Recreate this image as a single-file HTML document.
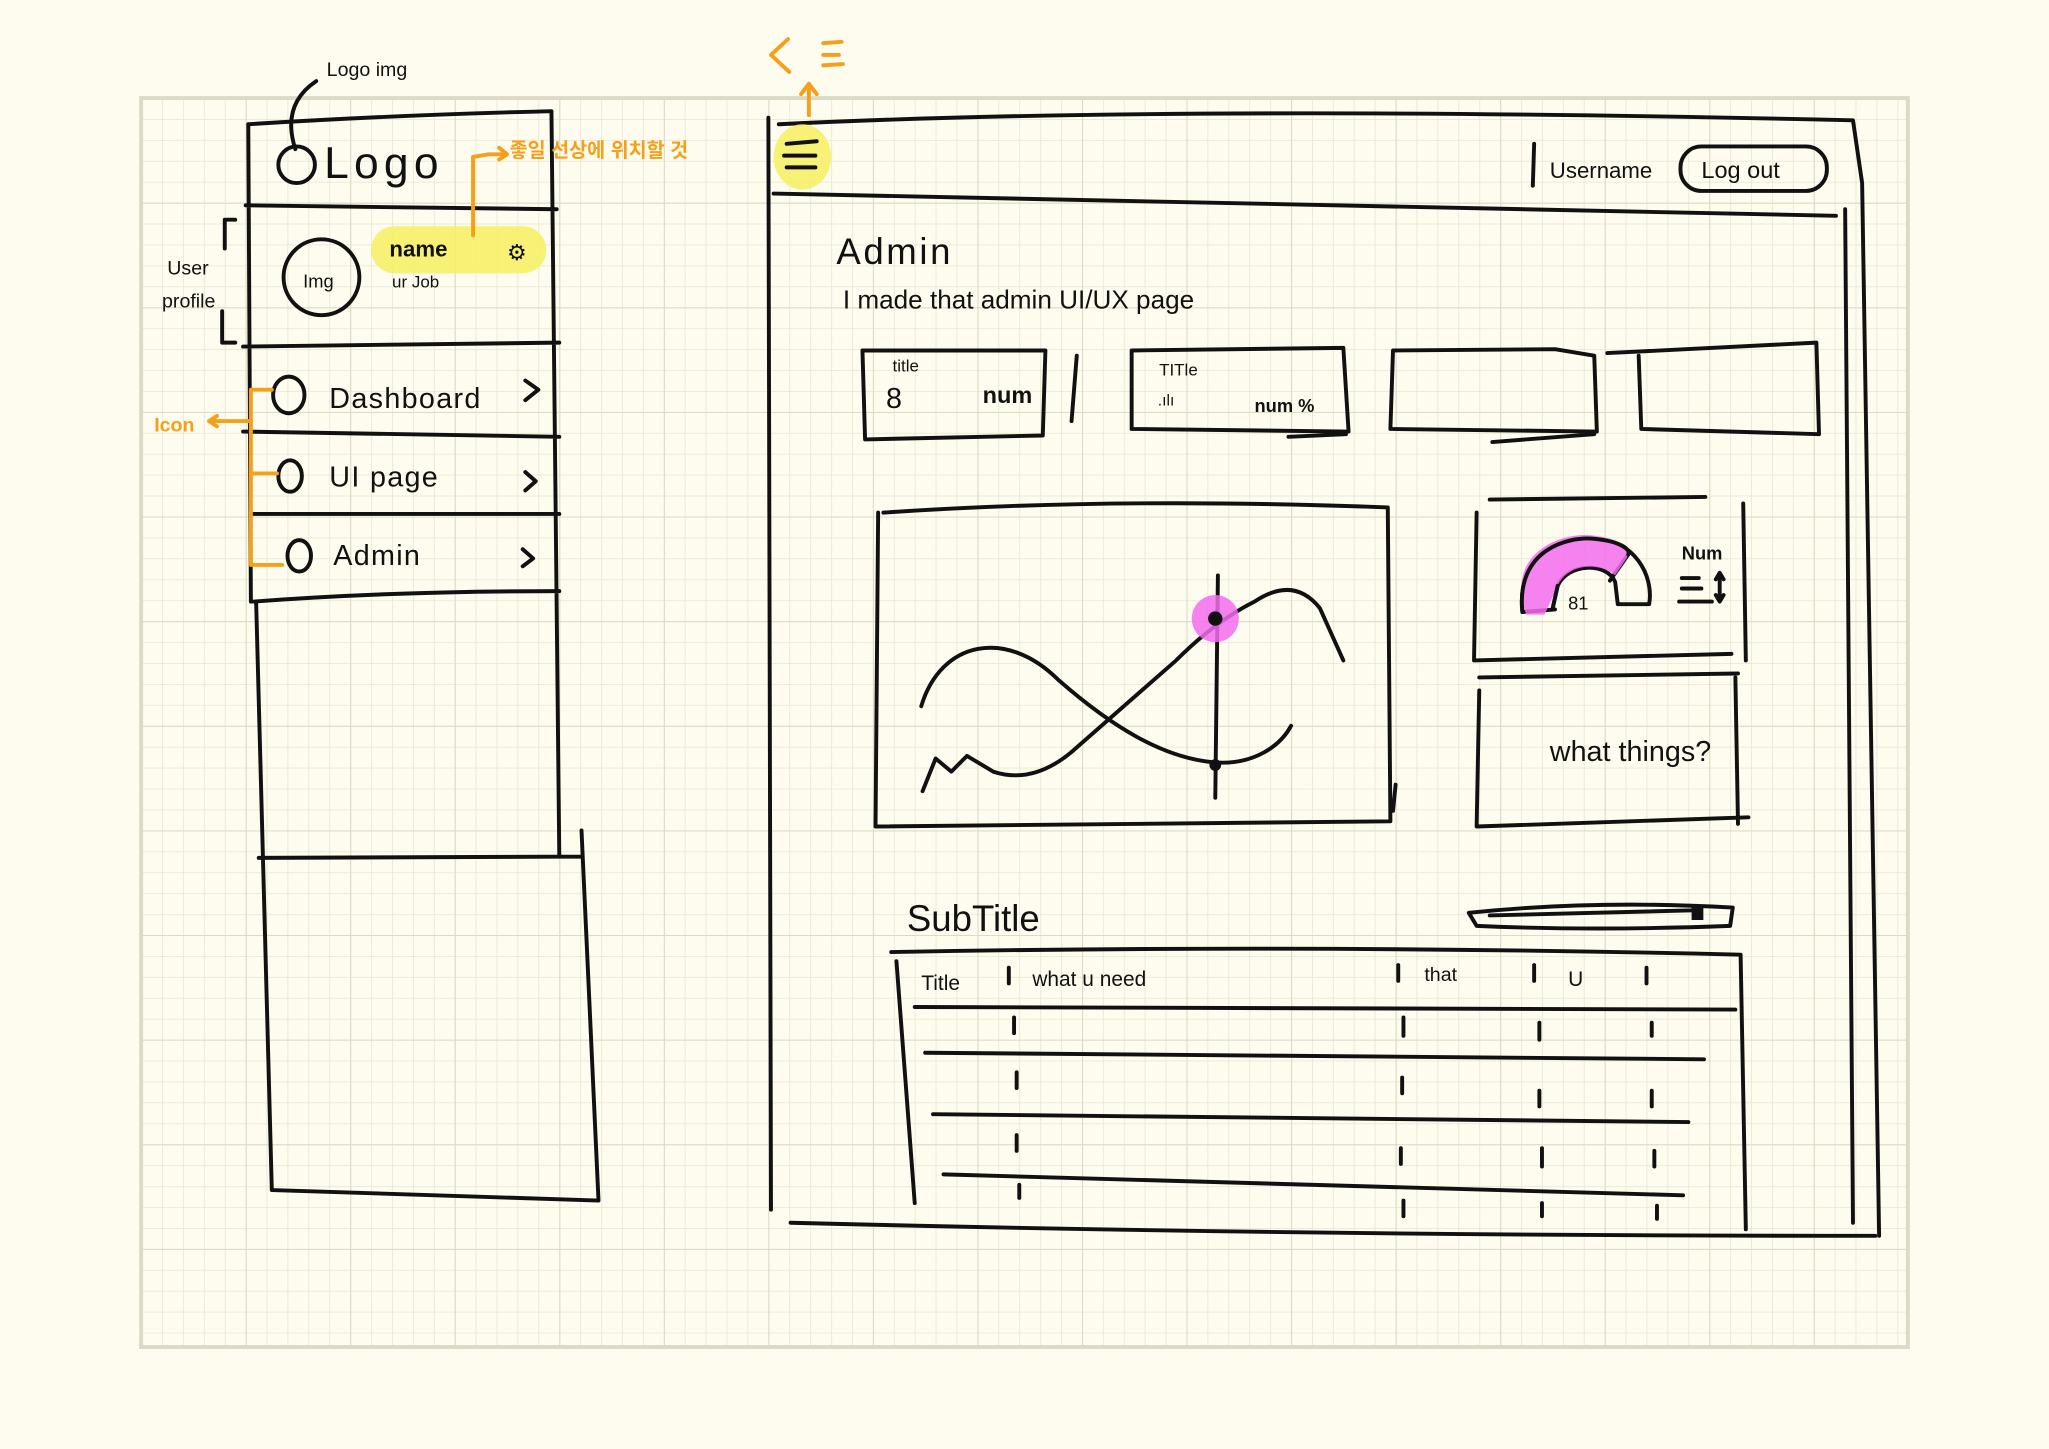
<!DOCTYPE html>
<html><head><meta charset="utf-8"><style>
html,body{margin:0;padding:0;background:#fdfcee;}
svg{display:block}
text{font-family:"Liberation Sans","Noto Sans CJK KR",sans-serif;}
</style></head><body>
<svg width="2049" height="1449" viewBox="0 0 1568 1108" preserveAspectRatio="none" xmlns="http://www.w3.org/2000/svg">
<defs>
<pattern id="g" x="108" y="75" width="16" height="16" patternUnits="userSpaceOnUse">
<path d="M0 0V16M0 0H16" stroke="#e7e5d3" stroke-width="1.2" fill="none"/>
</pattern>
<pattern id="G" x="108" y="75" width="80" height="80" patternUnits="userSpaceOnUse">
<path d="M0 0V80M0 0H80" stroke="#dcdac6" stroke-width="1.6" fill="none"/>
</pattern>
</defs>
<rect width="1568" height="1108" fill="#fdfcee"/>
<rect x="108" y="75" width="1352" height="955" fill="url(#g)"/>
<rect x="108" y="75" width="1352" height="955" fill="url(#G)"/>
<rect x="108" y="75" width="1352" height="955" fill="none" stroke="#dcdac6" stroke-width="3"/>

<g fill="none" stroke="#111" stroke-width="3" stroke-linecap="round" stroke-linejoin="round">
<path d="M190 95 Q300 88 422 85 L428 655 M190 95 L192 460 M188 157 L426 160 M186 265 L428 262 M186 330 L428 334 M192 393 L428 393 M194 460 Q300 452 428 452 M196 460 L208 910 L458 918 L445 635 M198 656 L445 655"/>
<circle cx="227" cy="126" r="14"/>
<path d="M226 114 Q215 80 242 62"/>
<circle cx="246" cy="212" r="29"/>
<path d="M180 168 L172 168 L172 190 M170 238 L170 262 L180 262"/>
<ellipse cx="221" cy="302" rx="12" ry="14"/>
<ellipse cx="222" cy="364" rx="9" ry="12"/>
<ellipse cx="229" cy="425" rx="9" ry="12"/>
<path d="M402 291 L412 298 L402 306 M402 361 L410 368 L402 375 M400 420 L408 427 L400 433"/>
<path d="M588 90 L590 925 M596 95 Q900 80 1418 92 L1425 140 L1438 945 M592 148 Q1000 158 1405 165 M605 935 Q1000 945 1435 945 M1412 160 L1418 935"/>
<path d="M1174 110 L1173 142"/>
<rect x="1286" y="112" width="112" height="34" rx="16"/>
<path d="M660 268 L800 268 L798 333 L662 336 Z M824 272 L820 322"/>
<path d="M866 268 L1028 266 L1032 330 L866 328 Z M986 334 L1030 332"/>
<path d="M1066 268 L1190 267 L1220 272 L1222 330 L1064 328 Z M1142 338 L1220 332"/>
<path d="M1230 270 L1390 262 L1392 332 L1256 328 L1254 272"/>
<path d="M676 392 Q850 380 1062 388 L1064 628 L670 632 L672 392 M1068 600 L1066 620"/>
<path d="M705 540 C720 490 770 480 810 520 C850 555 890 580 930 583 C960 585 980 570 988 555"/>
<path d="M706 605 L716 580 L728 590 L740 578 L760 590 Q790 600 820 575 Q860 540 900 505 Q930 475 960 460 Q990 440 1010 465 L1028 505"/>
<path d="M932 440 L930 610"/>
<path d="M1140 382 L1305 380 M1130 392 L1128 505 L1325 500 M1334 385 L1336 505 M1132 518 L1330 515 M1132 528 L1130 632 L1338 625 M1328 518 L1330 630"/>
<path d="M1165 468 C1160 420 1200 410 1220 412 C1250 412 1266 440 1262 462 L1238 462 L1236 445 C1230 430 1200 430 1192 448 L1188 466 M1165 468 L1190 466 M1232 444 L1246 424"/>
<path d="M1287 442 L1300 442 M1287 450 L1302 450 M1285 460 L1310 460 M1316 440 L1316 458 M1313 443 L1316 438 L1319 443 M1313 455 L1316 460 L1319 455"/>
<path d="M1124 698 Q1220 688 1326 694 L1324 708 Q1220 712 1130 708 Z M1140 700 L1300 696"/>
<path d="M682 728 Q1000 722 1332 730 L1336 940 M686 735 L700 920 M700 770 L1328 772 M708 805 L1304 810 M714 852 L1292 858 M722 898 L1288 914"/>
<path d="M772 740 L772 752 M1070 738 L1070 750 M1174 738 L1174 750 M1260 740 L1260 752 M776 778 L776 790 M1074 778 L1074 792 M1178 782 L1178 795 M1264 782 L1264 792 M778 820 L778 832 M1073 824 L1073 836 M1178 834 L1178 846 M1264 834 L1264 846 M778 868 L778 880 M1072 878 L1072 890 M1180 878 L1180 892 M1266 880 L1266 892 M780 906 L780 916 M1074 918 L1074 930 M1180 920 L1180 930 M1268 922 L1268 932"/>
</g>
<ellipse cx="614" cy="120" rx="22" ry="25" fill="#f6f060" opacity="0.85"/>
<rect x="284" y="173" width="134" height="36" rx="18" fill="#f6f060" opacity="0.85"/>
<circle cx="930" cy="473" r="18" fill="#f46cf0" opacity="0.85"/>
<path d="M1168 470 C1150 420 1200 405 1222 410 C1240 412 1250 420 1244 428 L1236 440 C1225 430 1200 430 1192 448 L1182 470 Z" fill="#f46cf0" opacity="0.85"/>
<g fill="none" stroke="#111" stroke-width="3" stroke-linecap="round">
<path d="M1165 468 C1160 420 1200 410 1220 412 C1240 414 1248 420 1246 424 M1192 448 L1188 466"/>
<path d="M602 110 L625 108 M600 119 L624 119 M602 128 L624 128"/>
<circle cx="930" cy="473" r="4" fill="#111"/>
<circle cx="930" cy="585" r="3" fill="#111"/>
<path d="M1296 694 l6 0 l0 8 l-6 0z" fill="#111"/>
</g>
<g fill="none" stroke="#f6a01a" stroke-width="3" stroke-linecap="round" stroke-linejoin="round">
<path d="M603 30 L590 42 L604 55 M630 33 L644 32 M630 42 L642 42 M630 50 L645 49 M619 88 L619 66 M613 72 L619 64 L625 72"/>
<path d="M362 180 L362 120 L374 118 L388 118 M382 113 L388 118 L382 122"/>
<path d="M192 298 L208 298 M192 298 L192 432 L216 432 M192 362 L212 362 M160 322 L190 322 M166 318 L160 322 L166 326"/>
</g>
<g fill="#f6a01a" font-size="15" font-weight="bold">
<text x="390" y="120">좋일 선상에 위치할 것</text>
<text x="118" y="330" font-size="15">Icon</text>
</g>
<g fill="#111">
<text x="250" y="58" font-size="15">Logo img</text>
<text x="248" y="136" font-size="34" letter-spacing="4">Logo</text>
<text x="128" y="210" font-size="15">User</text>
<text x="124" y="235" font-size="15">profile</text>
<text x="232" y="220" font-size="14">Img</text>
<text x="298" y="196" font-size="17" font-weight="bold">name</text>
<text x="388" y="199" font-size="17">⚙</text>
<text x="300" y="220" font-size="13">ur Job</text>
<text x="252" y="312" font-size="22" letter-spacing="1">Dashboard</text>
<text x="252" y="372" font-size="22" letter-spacing="1">UI page</text>
<text x="255" y="432" font-size="22" letter-spacing="1">Admin</text>
<text x="1186" y="136" font-size="17">Username</text>
<text x="1302" y="136" font-size="18">Log out</text>
<text x="640" y="202" font-size="28" letter-spacing="2">Admin</text>
<text x="645" y="236" font-size="20">I  made  that  admin  UI/UX  page</text>
<text x="683" y="284" font-size="13">title</text>
<text x="678" y="312" font-size="22">8</text>
<text x="752" y="308" font-size="18" font-weight="bold">num</text>
<text x="887" y="287" font-size="13">TITle</text>
<text x="886" y="310" font-size="12">.ılı</text>
<text x="960" y="315" font-size="14" font-weight="bold">num %</text>
<text x="1287" y="428" font-size="14" font-weight="bold">Num</text>
<text x="1200" y="466" font-size="14">81</text>
<text x="1186" y="582" font-size="22">what  things?</text>
<text x="694" y="712" font-size="28">SubTitle</text>
<text x="705" y="757" font-size="16">Title</text>
<text x="790" y="754" font-size="16">what   u   need</text>
<text x="1090" y="750" font-size="15">that</text>
<text x="1200" y="754" font-size="16">U</text>
</g>
</svg>
</body></html>
